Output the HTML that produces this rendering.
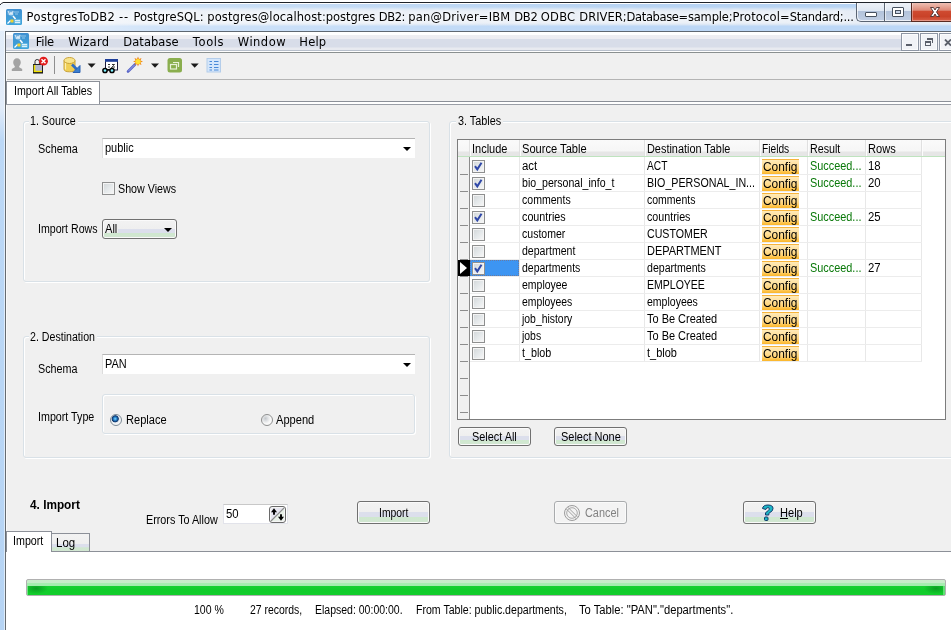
<!DOCTYPE html>
<html>
<head>
<meta charset="utf-8">
<title>PostgresToDB2</title>
<style>
html,body{margin:0;padding:0;}
body{width:951px;height:630px;overflow:hidden;position:relative;background:#f0f0f0;font-family:"Liberation Sans",sans-serif;font-size:12px;color:#000;}
.a{position:absolute;white-space:nowrap;box-sizing:border-box;}
.t{position:absolute;white-space:nowrap;font-size:12px;line-height:14px;transform-origin:0 0;filter:saturate(1);}
.grp{position:absolute;border:1px solid #d9e1e7;border-radius:3px;box-sizing:border-box;box-shadow:inset 1px 1px 0 #fff, 1px 1px 0 #fff;}
.btn{position:absolute;box-sizing:border-box;border:1px solid #707070;border-radius:3px;background:linear-gradient(180deg,#f2f2f2 0%,#efefef 48%,#dcdfec 49%,#dcdfec 71%,#cfe8cf 72%,#d2e6d2 100%);box-shadow:inset 0 0 0 1px #fafafa;}
.cb{position:absolute;width:13px;height:13px;border:1px solid #8e8f8f;background:linear-gradient(135deg,#d2d6d8 0%,#e4e8ea 50%,#f8f8f8 100%);box-shadow:inset 0 0 0 1px #f4f4f4;box-sizing:border-box;}
.cfg{position:absolute;left:762px;width:37px;height:15px;background:linear-gradient(180deg,#ffeab8 0,#ffe09c 5px,#ffd274 10px,#fcbc36 13px,#fbb52a 100%);box-sizing:border-box;border-top:1px dotted #f2b048;}
.ok{color:#087808;}
.hl{position:absolute;background:#ececec;height:1px;}
.vl{position:absolute;background:#e8e8e8;width:1px;}
.tick{position:absolute;left:460px;width:8px;height:1px;background:#8c8c8c;}
.arr{position:absolute;width:0;height:0;border-left:4px solid transparent;border-right:4px solid transparent;border-top:4px solid #000;}
</style>
</head>
<body>
<div class="a" style="left:0;top:0;width:951px;height:630px;background:linear-gradient(180deg,#e4eefa 0,#e2ecf9 108px,#bcd8f6 140px,#b6d4f4 100%);"></div>
<div class="a" style="left:4px;top:31px;width:1px;height:599px;background:rgba(255,255,255,.55);"></div>
<div class="a" style="left:0;top:4px;width:951px;height:27px;background:linear-gradient(180deg,#b7d3f3 0,#b9d5f4 3px,#d9e5f3 5px,#e6ecf5 7px,#e8eef6 19px,#d5e3f4 21px,#bcd7f6 22px,#bcd7f6 100%);"></div>
<div class="a" style="left:0;top:4px;width:951px;height:27px;background:linear-gradient(90deg,rgba(255,255,255,.8) 0,rgba(255,255,255,.6) 60px,rgba(255,255,255,.3) 160px,rgba(255,255,255,.12) 400px,rgba(255,255,255,0) 620px);"></div>
<div class="a" style="left:0;top:0;width:951px;height:2px;background:#fff;"></div>
<div class="a" style="left:3px;top:2px;width:948px;height:1px;background:#20242a;"></div>
<div class="a" style="left:0;top:3px;width:951px;height:1px;background:#fdfeff;"></div>
<svg class="a" style="left:0;top:0" width="8" height="10" viewBox="0 0 8 10"><path d="M0 0H8V2H3.500L0 5Z" fill="#fff"/><path d="M0 5 L1.500 3.300 L3.500 2.500 H8" fill="none" stroke="#20242a" stroke-width="1"/></svg>
<svg class="a" style="left:6px;top:9px" width="16" height="16" viewBox="0 0 16 16"><defs><linearGradient id="gi1" x1="0" y1="0" x2="0" y2="1"><stop offset="0" stop-color="#3f8fd0"/><stop offset="1" stop-color="#3ea5dc"/></linearGradient></defs><rect x="0" y="0" width="16" height="16" rx="1.500" fill="url(#gi1)"/><path d="M1.500 1.500h6v4.500l-2 1.500-4-2z" fill="#fff" fill-opacity=".28"/><path d="M2 2l2 4 1-3 1 3 1-4" stroke="#e4f2fc" stroke-width="0.900" fill="none"/><path d="M8 3h5M9 5h3" stroke="#a8d4f0" stroke-width="0.800"/><path d="M7 7l2.500 3" stroke="#fff" stroke-width="1.500"/><path d="M1.500 14.500l3-3" stroke="#fff" stroke-width="1.300"/><rect x="4.500" y="10.500" width="3" height="3" fill="#f2d230"/><rect x="8.500" y="10.500" width="6" height="4" fill="#8fd0ee"/><path d="M9 11.500h5M9 13.500h5" stroke="#fff" stroke-width="0.700"/></svg>
<div class="t " style="left:26.6px;top:10.6px;font-size:11.5px;line-height:13px;letter-spacing:0.26px;font-family:'DejaVu Sans',sans-serif;white-space:pre;text-shadow:0 0 4px #fff,0 0 6px #fff;">PostgresToDB2 </div>
<div class="t " style="left:119.0px;top:10.6px;font-size:11.5px;line-height:13px;letter-spacing:0.81px;font-family:'DejaVu Sans',sans-serif;white-space:pre;text-shadow:0 0 4px #fff,0 0 6px #fff;">-- </div>
<div class="t " style="left:133.4px;top:10.6px;font-size:11.5px;line-height:13px;letter-spacing:0.06px;font-family:'DejaVu Sans',sans-serif;white-space:pre;text-shadow:0 0 4px #fff,0 0 6px #fff;">PostgreSQL: </div>
<div class="t " style="left:207.3px;top:10.6px;font-size:11.5px;line-height:13px;letter-spacing:0.1px;font-family:'DejaVu Sans',sans-serif;white-space:pre;text-shadow:0 0 4px #fff,0 0 6px #fff;">postgres@localhost:</div>
<div class="t " style="left:325.8px;top:10.6px;font-size:11.5px;line-height:13px;letter-spacing:-0.04px;font-family:'DejaVu Sans',sans-serif;white-space:pre;text-shadow:0 0 4px #fff,0 0 6px #fff;">postgres </div>
<div class="t " style="left:378.8px;top:10.6px;font-size:11.5px;line-height:13px;letter-spacing:-0.42px;font-family:'DejaVu Sans',sans-serif;white-space:pre;text-shadow:0 0 4px #fff,0 0 6px #fff;">DB2: </div>
<div class="t " style="left:408.3px;top:10.6px;font-size:11.5px;line-height:13px;letter-spacing:0.2px;font-family:'DejaVu Sans',sans-serif;white-space:pre;text-shadow:0 0 4px #fff,0 0 6px #fff;">pan@Driver=IBM </div>
<div class="t " style="left:514.3px;top:10.6px;font-size:11.5px;line-height:13px;letter-spacing:-0.3px;font-family:'DejaVu Sans',sans-serif;white-space:pre;text-shadow:0 0 4px #fff,0 0 6px #fff;">DB2 </div>
<div class="t " style="left:540.8px;top:10.6px;font-size:11.5px;line-height:13px;letter-spacing:0.24px;font-family:'DejaVu Sans',sans-serif;white-space:pre;text-shadow:0 0 4px #fff,0 0 6px #fff;">ODBC </div>
<div class="t " style="left:579.3px;top:10.6px;font-size:11.5px;line-height:13px;letter-spacing:0.01px;font-family:'DejaVu Sans',sans-serif;white-space:pre;text-shadow:0 0 4px #fff,0 0 6px #fff;">DRIVER;</div>
<div class="t " style="left:626.6px;top:10.6px;font-size:11.5px;line-height:13px;letter-spacing:-0.36px;font-family:'DejaVu Sans',sans-serif;white-space:pre;text-shadow:0 0 4px #fff,0 0 6px #fff;">Database=</div>
<div class="t " style="left:687.9px;top:10.6px;font-size:11.5px;line-height:13px;letter-spacing:-0.16px;font-family:'DejaVu Sans',sans-serif;white-space:pre;text-shadow:0 0 4px #fff,0 0 6px #fff;">sample;</div>
<div class="t " style="left:732.5px;top:10.6px;font-size:11.5px;line-height:13px;letter-spacing:0.15px;font-family:'DejaVu Sans',sans-serif;white-space:pre;text-shadow:0 0 4px #fff,0 0 6px #fff;">Protocol=</div>
<div class="t " style="left:789.8px;top:10.6px;font-size:11.5px;line-height:13px;letter-spacing:-0.28px;font-family:'DejaVu Sans',sans-serif;white-space:pre;text-shadow:0 0 4px #fff,0 0 6px #fff;">Standard;...</div>
<div class="a" style="left:856px;top:3px;width:56px;height:19px;border:1px solid #5a6472;border-top:none;border-right:none;border-radius:0 0 0 5px;background:linear-gradient(180deg,#eef2f8 0%,#dfe7f2 44%,#b3c3db 46%,#c1cfe4 100%);box-shadow:inset 1px -1px 0 rgba(255,255,255,.7);"></div>
<div class="a" style="left:884px;top:3px;width:1px;height:18px;background:#5a6472;"></div>
<div class="a" style="left:885px;top:3px;width:1px;height:18px;background:rgba(255,255,255,.6);"></div>
<div class="a" style="left:911px;top:3px;width:40px;height:19px;border-left:1px solid #5a2a22;border-bottom:1px solid #5a2a22;background:linear-gradient(180deg,#eec0b4 0%,#dd8a78 40%,#cf4a30 46%,#c94228 75%,#d86048 100%);box-shadow:inset 1px -1px 0 rgba(255,255,255,.35);"></div>
<div class="a" style="left:865px;top:12px;width:12px;height:5px;border:1px solid #47515f;background:#fff;border-radius:1px;"></div>
<div class="a" style="left:892px;top:7px;width:12px;height:10px;border:1px solid #47515f;background:#fff;border-radius:1px;"></div>
<div class="a" style="left:895px;top:10px;width:6px;height:4px;border:1px solid #47515f;background:#c7d3e6;"></div>
<svg class="a" style="left:928px;top:6px" width="14" height="12" viewBox="0 0 14 12"><path d="M2.500 1.500h3l1.500 2.500 1.500-2.500h3l-3 4.500 3 4.500h-3l-1.500-2.500-1.500 2.500h-3l3-4.500z" fill="#fff" stroke="#4a3030" stroke-width="0.900"/></svg>
<div class="a" style="left:5px;top:31px;width:946px;height:599px;border-left:1px solid #666b70;border-top:1px solid #5f6872;background:#f0f0f0;"></div>
<div class="a" style="left:6px;top:32px;width:1px;height:598px;background:#fafafa;"></div>
<div class="a" style="left:6px;top:32px;width:895px;height:20px;background:linear-gradient(180deg,#fff 0,#fff 3px,#eeeef2 3px,#ececf2 7px,#d8dde9 7px,#d8dde9 15px,#e8eaf0 16px,#e8eaf0 18px,#b8c0cc 18px,#b8c0cc 19px,#fff 19px);"></div>
<div class="a" style="left:901px;top:32px;width:50px;height:20px;background:linear-gradient(180deg,#fff 0,#fff 2px,#f1f2f6 2px,#eff0f5 18px,#b8c0cc 18px,#b8c0cc 19px,#fff 19px);"></div>
<div class="a" style="left:6px;top:52px;width:945px;height:1px;background:#8a9090;"></div>
<svg class="a" style="left:13px;top:33px" width="16" height="16" viewBox="0 0 16 16"><defs><linearGradient id="gi2" x1="0" y1="0" x2="0" y2="1"><stop offset="0" stop-color="#3f8fd0"/><stop offset="1" stop-color="#3ea5dc"/></linearGradient></defs><rect x="0" y="0" width="16" height="16" rx="1.500" fill="url(#gi2)"/><path d="M1.500 1.500h6v4.500l-2 1.500-4-2z" fill="#fff" fill-opacity=".28"/><path d="M2 2l2 4 1-3 1 3 1-4" stroke="#e4f2fc" stroke-width="0.900" fill="none"/><path d="M8 3h5M9 5h3" stroke="#a8d4f0" stroke-width="0.800"/><path d="M7 7l2.500 3" stroke="#fff" stroke-width="1.500"/><path d="M1.500 14.500l3-3" stroke="#fff" stroke-width="1.300"/><rect x="4.500" y="10.500" width="3" height="3" fill="#f2d230"/><rect x="8.500" y="10.500" width="6" height="4" fill="#8fd0ee"/><path d="M9 11.500h5M9 13.500h5" stroke="#fff" stroke-width="0.700"/></svg>
<div class="t " style="left:35.8px;top:36.2px;font-size:11.5px;line-height:13px;letter-spacing:-0.32px;font-family:'DejaVu Sans',sans-serif;">File</div>
<div class="t " style="left:68.3px;top:36.2px;font-size:11.5px;line-height:13px;letter-spacing:0.31px;font-family:'DejaVu Sans',sans-serif;">Wizard</div>
<div class="t " style="left:123.3px;top:36.2px;font-size:11.5px;line-height:13px;letter-spacing:0.06px;font-family:'DejaVu Sans',sans-serif;">Database</div>
<div class="t " style="left:192.8px;top:36.2px;font-size:11.5px;line-height:13px;letter-spacing:0.62px;font-family:'DejaVu Sans',sans-serif;">Tools</div>
<div class="t " style="left:237.8px;top:36.2px;font-size:11.5px;line-height:13px;letter-spacing:0.49px;font-family:'DejaVu Sans',sans-serif;">Window</div>
<div class="t " style="left:299.3px;top:36.2px;font-size:11.5px;line-height:13px;letter-spacing:0.2px;font-family:'DejaVu Sans',sans-serif;">Help</div>
<div class="a" style="left:901px;top:33px;width:18px;height:18px;border:1px solid #8e96a4;background:#f1f3f7;box-shadow:inset 0 0 0 1px #fbfcfd;"></div>
<div class="a" style="left:920px;top:33px;width:18px;height:18px;border:1px solid #8e96a4;background:#f1f3f7;box-shadow:inset 0 0 0 1px #fbfcfd;"></div>
<div class="a" style="left:939px;top:33px;width:18px;height:18px;border:1px solid #8e96a4;background:#f1f3f7;box-shadow:inset 0 0 0 1px #fbfcfd;"></div>
<div class="a" style="left:906px;top:44px;width:6px;height:2px;background:#5a5f6a;"></div>
<div class="a" style="left:925px;top:41px;width:6px;height:5px;border:1px solid #5a5f6a;border-top-width:2px;"></div>
<div class="a" style="left:927px;top:38px;width:6px;height:5px;border:1px solid #5a5f6a;border-top-width:2px;border-left:none;border-bottom:none"></div>
<svg class="a" style="left:944px;top:39px" width="8" height="8" viewBox="0 0 8 8"><path d="M1 0.500l6 6M7 0.500l-6 6" stroke="#5a5f6a" stroke-width="1.800"/></svg>
<div class="a" style="left:7px;top:79px;width:944px;height:1px;background:#b4b4b4;"></div>
<div class="a" style="left:54px;top:56px;width:1px;height:18px;background:#8e8e8e;"></div>
<svg class="a" style="left:7px;top:53px" width="230" height="26" viewBox="0 0 230 26">
<g>
<path d="M10 5.300c2.300 0 3.800 1.800 3.800 4.200 0 1.600-.8 2.800-1.600 3.500l0 1.200 3 1.800v2h-10.400v-2l3-1.800 0-1.200c-.8-.7-1.600-1.900-1.600-3.500 0-2.400 1.500-4.200 3.800-4.200z" fill="#a3a3a3"/>
<path d="M28 12v-3.500q0-2 2.200-2t2.200 2V12" fill="none" stroke="#333" stroke-width="1"/>
<rect x="26.500" y="11.500" width="9" height="8" fill="#b4b8cc" stroke="#222" stroke-width="1"/><path d="M27.500 12v7M27 18.500h8" stroke="#f2e200" stroke-width="1.600"/><path d="M26 20h10" stroke="#111" stroke-width="1"/>
<circle cx="36.500" cy="8.200" r="4.400" fill="#e21c1c"/><path d="M34.500 6.200l4 4m0-4l-4 4" stroke="#fff" stroke-width="1.400"/>
<path d="M57 7.500v8.500q0 2.800 5.500 2.800t5.500-2.800v-8.500z" fill="#f0cf54" stroke="#c9a238" stroke-width="1"/><ellipse cx="62.500" cy="7.500" rx="5.500" ry="3" fill="#f8e48c" stroke="#c9a238" stroke-width="1"/><path d="M58.500 10v6.500" stroke="#fbeeb0" stroke-width="1.200"/>
<path d="M65 11.500l5 5" stroke="#2f6ec4" stroke-width="2.600"/><path d="M73 12.500v7h-7z" fill="#3b7fd0" stroke="#2a62b4" stroke-width="1" stroke-linejoin="round"/>
<path d="M80.600 10.500h8l-4 4.200z" fill="#1a1a1a"/>
<rect x="98.500" y="6.500" width="12" height="10.500" fill="#fff" stroke="#1c1c3a"/><rect x="98" y="6" width="13" height="2.800" fill="#1f3f9a"/><path d="M101 11.500h2m2 0h2m-6 2.500h2m2 0h3" stroke="#333"/><path d="M104 15l4-4" stroke="#333" stroke-width="0.800"/>
<circle cx="98" cy="17.500" r="2.100" fill="#7ff0ff" stroke="#000" stroke-width="1.500"/><circle cx="105" cy="17.500" r="2.100" fill="#7ff0ff" stroke="#000" stroke-width="1.500"/><path d="M100.200 16.800h2.600" stroke="#000" stroke-width="1.600"/>
<path d="M121 18.500l7-7" stroke="#5a66c8" stroke-width="2.600" stroke-linecap="round"/><path d="M121.500 18l6-6" stroke="#aab4f0" stroke-width="0.800"/>
<path d="M131 3.500l1 2.500 2.500-1-1 2.500 2.500 1-2.500 1 1 2.500-2.500-1-1 2.500-1-2.500-2.500 1 1-2.500-2.500-1 2.500-1-1-2.500 2.500 1z" fill="#f08a1c"/><circle cx="131" cy="8.500" r="2.600" fill="#ffe030"/>
<path d="M144 10.500h8l-4 4.200z" fill="#1a1a1a"/>
<rect x="160.500" y="5" width="14.500" height="14.500" rx="2.500" fill="#8aae4e"/><rect x="163.500" y="11.500" width="6" height="4.500" fill="none" stroke="#e8f0d8" stroke-width="1.200"/><path d="M166 9.500h5.500v4.500" fill="none" stroke="#e8f0d8" stroke-width="1.200"/>
<path d="M183.700 10.500h8l-4 4.200z" fill="#1a1a1a"/>
<rect x="200" y="5.500" width="13.500" height="13.500" fill="#d4e6fb" stroke="#b4cdea" stroke-width="1"/><path d="M202.500 8.500h2.500m2 0h4.500M202.500 11.500h2.500m2 0h4.500M202.500 14.500h2.500m2 0h4.500M202.500 17h2.500m2 0h4.500" stroke="#4a8ad8" stroke-width="1.200"/>
</g></svg>
<div class="a" style="left:100px;top:101px;width:851px;height:1px;background:#8c9098;"></div>
<div class="a" style="left:7px;top:102px;width:944px;height:2px;background:#fff;"></div>
<div class="a" style="left:6px;top:104px;width:945px;height:1px;background:#9a9ea6;"></div>
<div class="a" style="left:6px;top:81px;width:94px;height:23px;border:1px solid #8c9098;border-bottom:none;background:#fff;"></div>
<div class="t " style="left:14.1px;top:83.7px;font-size:12px;line-height:14px;transform:scaleX(0.889);">Import All Tables</div>
<div class="grp" style="left:23px;top:121px;width:407px;height:161px;"></div>
<div class="a" style="left:29px;top:119px;width:49px;height:5px;background:#f0f0f0;"></div>
<div class="t " style="left:30.3px;top:113.8px;font-size:12px;line-height:14px;transform:scaleX(0.890);">1. Source</div>
<div class="t " style="left:37.6px;top:141.5px;font-size:12px;line-height:14px;transform:scaleX(0.903);">Schema</div>
<div class="a" style="left:102px;top:138px;width:313px;height:20px;background:#fff;border-top:1px solid #b4b4b4;border-left:1px solid #dcdcdc;"></div>
<div class="t " style="left:104.7px;top:140.6px;font-size:12px;line-height:14px;transform:scaleX(0.913);">public</div>
<div class="arr" style="left:403px;top:147px;"></div>
<div class="cb" style="left:102px;top:182px;"></div>
<div class="t " style="left:118.1px;top:181.5px;font-size:12px;line-height:14px;transform:scaleX(0.892);">Show Views</div>
<div class="t " style="left:37.6px;top:221.7px;font-size:12px;line-height:14px;transform:scaleX(0.884);">Import Rows</div>
<div class="btn" style="left:102px;top:219px;width:75px;height:20px;"></div>
<div class="a" style="left:104px;top:228px;width:14px;height:5px;background:#efefef;"></div>
<div class="t " style="left:104.8px;top:221.7px;font-size:12px;line-height:14px;transform:scaleX(0.925);">All</div>
<div class="arr" style="left:164px;top:228px;"></div>
<div class="grp" style="left:23px;top:336px;width:407px;height:122px;"></div>
<div class="a" style="left:29px;top:334px;width:68px;height:5px;background:#f0f0f0;"></div>
<div class="t " style="left:30.3px;top:329.5px;font-size:12px;line-height:14px;transform:scaleX(0.885);">2. Destination</div>
<div class="t " style="left:37.7px;top:361.8px;font-size:12px;line-height:14px;transform:scaleX(0.896);">Schema</div>
<div class="a" style="left:102px;top:354px;width:313px;height:20px;background:#fff;border-top:1px solid #b4b4b4;border-left:1px solid #dcdcdc;"></div>
<div class="t " style="left:104.8px;top:356.6px;font-size:12px;line-height:14px;transform:scaleX(0.909);">PAN</div>
<div class="arr" style="left:403px;top:363px;"></div>
<div class="t " style="left:37.7px;top:410.0px;font-size:12px;line-height:14px;transform:scaleX(0.892);">Import Type</div>
<div class="grp" style="left:102px;top:394px;width:313px;height:40px;"></div>
<div class="a" style="left:110px;top:414px;width:12px;height:12px;border:1px solid #7c8a96;border-radius:6px;background:radial-gradient(circle at 42% 38%,#8ad8fa 0,#2e90d8 1.400px,#164a88 2.600px,#123a6e 3.200px,#dfe6ee 3.900px,#f4f5f6 5px);"></div>
<div class="t " style="left:125.6px;top:412.6px;font-size:12px;line-height:14px;transform:scaleX(0.923);">Replace</div>
<div class="a" style="left:261px;top:414px;width:12px;height:12px;border:1px solid #8e8f8f;border-radius:6px;background:radial-gradient(circle at 35% 35%,#c4c8cc 0,#e4e6e8 3px,#f8f8f8 5px);"></div>
<div class="t " style="left:276.2px;top:412.6px;font-size:12px;line-height:14px;transform:scaleX(0.924);">Append</div>
<div class="grp" style="left:449px;top:121px;width:520px;height:337px;"></div>
<div class="a" style="left:456px;top:119px;width:47px;height:5px;background:#f0f0f0;"></div>
<div class="t " style="left:457.5px;top:113.8px;font-size:12px;line-height:14px;transform:scaleX(0.904);">3. Tables</div>
<div class="a" style="left:457px;top:139px;width:489px;height:281px;border:1px solid #7c7c7c;background:#fff;"></div>
<div class="a" style="left:458px;top:140px;width:487px;height:16px;background:linear-gradient(180deg,#fafafa 0,#f6f6f6 11px,#e6e6e6 12px,#e6e6e6 100%);"></div>
<div class="a" style="left:458px;top:156px;width:487px;height:1px;background:#bfe3bf;"></div>
<div class="a" style="left:469px;top:140px;width:2px;height:16px;background:linear-gradient(90deg,#e0e0e0 50%,#fcfcfc 50%);"></div>
<div class="a" style="left:519px;top:140px;width:2px;height:16px;background:linear-gradient(90deg,#e0e0e0 50%,#fcfcfc 50%);"></div>
<div class="a" style="left:644px;top:140px;width:2px;height:16px;background:linear-gradient(90deg,#e0e0e0 50%,#fcfcfc 50%);"></div>
<div class="a" style="left:759px;top:140px;width:2px;height:16px;background:linear-gradient(90deg,#e0e0e0 50%,#fcfcfc 50%);"></div>
<div class="a" style="left:807px;top:140px;width:2px;height:16px;background:linear-gradient(90deg,#e0e0e0 50%,#fcfcfc 50%);"></div>
<div class="a" style="left:865px;top:140px;width:2px;height:16px;background:linear-gradient(90deg,#e0e0e0 50%,#fcfcfc 50%);"></div>
<div class="a" style="left:921px;top:140px;width:2px;height:16px;background:linear-gradient(90deg,#e0e0e0 50%,#fcfcfc 50%);"></div>
<div class="a" style="left:458px;top:157px;width:12px;height:262px;background:#f0f0f0;border-right:1px solid #8c8c8c;border-left:1px solid #f8f8f8;"></div>
<div class="t " style="left:471.8px;top:141.5px;font-size:12px;line-height:14px;transform:scaleX(0.916);">Include</div>
<div class="t " style="left:521.7px;top:141.5px;font-size:12px;line-height:14px;transform:scaleX(0.926);">Source Table</div>
<div class="t " style="left:646.6px;top:141.5px;font-size:12px;line-height:14px;transform:scaleX(0.908);">Destination Table</div>
<div class="t " style="left:761.8px;top:141.5px;font-size:12px;line-height:14px;transform:scaleX(0.848);">Fields</div>
<div class="t " style="left:809.8px;top:141.5px;font-size:12px;line-height:14px;transform:scaleX(0.892);">Result</div>
<div class="t " style="left:867.6px;top:141.5px;font-size:12px;line-height:14px;transform:scaleX(0.924);">Rows</div>
<div class="vl" style="left:519px;top:157px;height:205px;"></div>
<div class="vl" style="left:644px;top:157px;height:205px;"></div>
<div class="vl" style="left:759px;top:157px;height:205px;"></div>
<div class="vl" style="left:807px;top:157px;height:205px;"></div>
<div class="vl" style="left:865px;top:157px;height:205px;"></div>
<div class="vl" style="left:921px;top:157px;height:205px;"></div>
<div class="hl" style="left:470px;top:174px;width:452px;"></div>
<div class="tick" style="top:174px;"></div>
<div class="cb" style="left:472px;top:160px;"></div>
<svg class="a" style="left:472px;top:160px" width="13" height="13" viewBox="0 0 13 13"><path d="M3 6.200l2.300 3.200 4.200-6.600" fill="none" stroke="#3048a8" stroke-width="2"/></svg>
<div class="t " style="left:521.7px;top:159.1px;font-size:12px;line-height:14px;transform:scaleX(0.952);">act</div>
<div class="t " style="left:646.6px;top:159.1px;font-size:12px;line-height:14px;transform:scaleX(0.852);">ACT</div>
<div class="cfg" style="top:159px;"></div>
<div class="t " style="left:763.0px;top:158.6px;font-size:13.6px;line-height:16px;transform:scaleX(0.877);">Config</div>
<div class="t ok" style="left:809.8px;top:159.1px;font-size:12px;line-height:14px;transform:scaleX(0.907);">Succeed...</div>
<div class="t " style="left:867.6px;top:159.1px;font-size:12px;line-height:14px;transform:scaleX(0.946);">18</div>
<div class="hl" style="left:470px;top:191px;width:452px;"></div>
<div class="tick" style="top:191px;"></div>
<div class="cb" style="left:472px;top:177px;"></div>
<svg class="a" style="left:472px;top:177px" width="13" height="13" viewBox="0 0 13 13"><path d="M3 6.200l2.300 3.200 4.200-6.600" fill="none" stroke="#3048a8" stroke-width="2"/></svg>
<div class="t " style="left:521.7px;top:176.1px;font-size:12px;line-height:14px;transform:scaleX(0.882);">bio_personal_info_t</div>
<div class="t " style="left:646.6px;top:176.1px;font-size:12px;line-height:14px;transform:scaleX(0.890);">BIO_PERSONAL_IN...</div>
<div class="cfg" style="top:176px;"></div>
<div class="t " style="left:763.0px;top:175.6px;font-size:13.6px;line-height:16px;transform:scaleX(0.877);">Config</div>
<div class="t ok" style="left:809.8px;top:176.1px;font-size:12px;line-height:14px;transform:scaleX(0.907);">Succeed...</div>
<div class="t " style="left:867.6px;top:176.1px;font-size:12px;line-height:14px;transform:scaleX(0.946);">20</div>
<div class="hl" style="left:470px;top:208px;width:452px;"></div>
<div class="tick" style="top:208px;"></div>
<div class="cb" style="left:472px;top:194px;"></div>
<div class="t " style="left:521.7px;top:193.1px;font-size:12px;line-height:14px;transform:scaleX(0.879);">comments</div>
<div class="t " style="left:646.6px;top:193.1px;font-size:12px;line-height:14px;transform:scaleX(0.875);">comments</div>
<div class="cfg" style="top:193px;"></div>
<div class="t " style="left:763.0px;top:192.6px;font-size:13.6px;line-height:16px;transform:scaleX(0.877);">Config</div>
<div class="hl" style="left:470px;top:225px;width:452px;"></div>
<div class="tick" style="top:225px;"></div>
<div class="cb" style="left:472px;top:211px;"></div>
<svg class="a" style="left:472px;top:211px" width="13" height="13" viewBox="0 0 13 13"><path d="M3 6.200l2.300 3.200 4.200-6.600" fill="none" stroke="#3048a8" stroke-width="2"/></svg>
<div class="t " style="left:521.7px;top:210.1px;font-size:12px;line-height:14px;transform:scaleX(0.896);">countries</div>
<div class="t " style="left:646.6px;top:210.1px;font-size:12px;line-height:14px;transform:scaleX(0.892);">countries</div>
<div class="cfg" style="top:210px;"></div>
<div class="t " style="left:763.0px;top:209.6px;font-size:13.6px;line-height:16px;transform:scaleX(0.877);">Config</div>
<div class="t ok" style="left:809.8px;top:210.1px;font-size:12px;line-height:14px;transform:scaleX(0.907);">Succeed...</div>
<div class="t " style="left:867.6px;top:210.1px;font-size:12px;line-height:14px;transform:scaleX(0.946);">25</div>
<div class="hl" style="left:470px;top:242px;width:452px;"></div>
<div class="tick" style="top:242px;"></div>
<div class="cb" style="left:472px;top:228px;"></div>
<div class="t " style="left:521.7px;top:227.1px;font-size:12px;line-height:14px;transform:scaleX(0.878);">customer</div>
<div class="t " style="left:646.6px;top:227.1px;font-size:12px;line-height:14px;transform:scaleX(0.887);">CUSTOMER</div>
<div class="cfg" style="top:227px;"></div>
<div class="t " style="left:763.0px;top:226.6px;font-size:13.6px;line-height:16px;transform:scaleX(0.877);">Config</div>
<div class="hl" style="left:470px;top:259px;width:452px;"></div>
<div class="tick" style="top:259px;"></div>
<div class="cb" style="left:472px;top:245px;"></div>
<div class="t " style="left:521.7px;top:244.1px;font-size:12px;line-height:14px;transform:scaleX(0.880);">department</div>
<div class="t " style="left:646.6px;top:244.1px;font-size:12px;line-height:14px;transform:scaleX(0.913);">DEPARTMENT</div>
<div class="cfg" style="top:244px;"></div>
<div class="t " style="left:763.0px;top:243.6px;font-size:13.6px;line-height:16px;transform:scaleX(0.877);">Config</div>
<div class="hl" style="left:470px;top:276px;width:452px;"></div>
<div class="tick" style="top:276px;"></div>
<div class="a" style="left:458px;top:260px;width:12px;height:16px;background:#000;"></div>
<div class="a" style="left:460px;top:262px;width:0;height:0;border-top:6px solid transparent;border-bottom:6px solid transparent;border-left:7px solid #fff;"></div>
<div class="a" style="left:470px;top:260px;width:49px;height:16px;background:#3d95f2;border:1px dotted #6a7aa0;"></div>
<div class="cb" style="left:472px;top:262px;"></div>
<svg class="a" style="left:472px;top:262px" width="13" height="13" viewBox="0 0 13 13"><path d="M3 6.200l2.300 3.200 4.200-6.600" fill="none" stroke="#3048a8" stroke-width="2"/></svg>
<div class="t " style="left:521.7px;top:261.1px;font-size:12px;line-height:14px;transform:scaleX(0.875);">departments</div>
<div class="t " style="left:646.6px;top:261.1px;font-size:12px;line-height:14px;transform:scaleX(0.882);">departments</div>
<div class="cfg" style="top:261px;"></div>
<div class="t " style="left:763.0px;top:260.6px;font-size:13.6px;line-height:16px;transform:scaleX(0.877);">Config</div>
<div class="t ok" style="left:809.8px;top:261.1px;font-size:12px;line-height:14px;transform:scaleX(0.907);">Succeed...</div>
<div class="t " style="left:867.6px;top:261.1px;font-size:12px;line-height:14px;transform:scaleX(0.946);">27</div>
<div class="hl" style="left:470px;top:293px;width:452px;"></div>
<div class="tick" style="top:293px;"></div>
<div class="cb" style="left:472px;top:279px;"></div>
<div class="t " style="left:521.7px;top:278.1px;font-size:12px;line-height:14px;transform:scaleX(0.873);">employee</div>
<div class="t " style="left:646.6px;top:278.1px;font-size:12px;line-height:14px;transform:scaleX(0.876);">EMPLOYEE</div>
<div class="cfg" style="top:278px;"></div>
<div class="t " style="left:763.0px;top:277.6px;font-size:13.6px;line-height:16px;transform:scaleX(0.877);">Config</div>
<div class="hl" style="left:470px;top:310px;width:452px;"></div>
<div class="tick" style="top:310px;"></div>
<div class="cb" style="left:472px;top:296px;"></div>
<div class="t " style="left:521.7px;top:295.1px;font-size:12px;line-height:14px;transform:scaleX(0.867);">employees</div>
<div class="t " style="left:646.6px;top:295.1px;font-size:12px;line-height:14px;transform:scaleX(0.876);">employees</div>
<div class="cfg" style="top:295px;"></div>
<div class="t " style="left:763.0px;top:294.6px;font-size:13.6px;line-height:16px;transform:scaleX(0.877);">Config</div>
<div class="hl" style="left:470px;top:327px;width:452px;"></div>
<div class="tick" style="top:327px;"></div>
<div class="cb" style="left:472px;top:313px;"></div>
<div class="t " style="left:521.7px;top:312.1px;font-size:12px;line-height:14px;transform:scaleX(0.867);">job_history</div>
<div class="t " style="left:646.6px;top:312.1px;font-size:12px;line-height:14px;transform:scaleX(0.914);">To Be Created</div>
<div class="cfg" style="top:312px;"></div>
<div class="t " style="left:763.0px;top:311.6px;font-size:13.6px;line-height:16px;transform:scaleX(0.877);">Config</div>
<div class="hl" style="left:470px;top:344px;width:452px;"></div>
<div class="tick" style="top:344px;"></div>
<div class="cb" style="left:472px;top:330px;"></div>
<div class="t " style="left:521.7px;top:329.1px;font-size:12px;line-height:14px;transform:scaleX(0.869);">jobs</div>
<div class="t " style="left:646.6px;top:329.1px;font-size:12px;line-height:14px;transform:scaleX(0.914);">To Be Created</div>
<div class="cfg" style="top:329px;"></div>
<div class="t " style="left:763.0px;top:328.6px;font-size:13.6px;line-height:16px;transform:scaleX(0.877);">Config</div>
<div class="hl" style="left:470px;top:361px;width:452px;"></div>
<div class="tick" style="top:361px;"></div>
<div class="cb" style="left:472px;top:347px;"></div>
<div class="t " style="left:521.7px;top:346.1px;font-size:12px;line-height:14px;transform:scaleX(0.897);">t_blob</div>
<div class="t " style="left:646.6px;top:346.1px;font-size:12px;line-height:14px;transform:scaleX(0.912);">t_blob</div>
<div class="cfg" style="top:346px;"></div>
<div class="t " style="left:763.0px;top:345.6px;font-size:13.6px;line-height:16px;transform:scaleX(0.877);">Config</div>
<div class="tick" style="top:378px;"></div>
<div class="tick" style="top:395px;"></div>
<div class="tick" style="top:412px;"></div>
<div class="btn" style="left:458px;top:427px;width:73px;height:19px;"></div>
<div class="t " style="left:471.6px;top:429.8px;font-size:12px;line-height:14px;transform:scaleX(0.906);">Select All</div>
<div class="btn" style="left:554px;top:427px;width:73px;height:19px;"></div>
<div class="t " style="left:560.6px;top:429.8px;font-size:12px;line-height:14px;transform:scaleX(0.915);">Select None</div>
<div class="t " style="left:30.3px;top:497.6px;font-size:12px;line-height:14px;transform:scaleX(0.984);font-weight:bold;">4. Import</div>
<div class="t " style="left:145.7px;top:513.4px;font-size:12px;line-height:14px;transform:scaleX(0.898);">Errors To Allow</div>
<div class="a" style="left:223px;top:504px;width:65px;height:20px;background:#fff;border:1px solid #e2e3ea;border-top-color:#c8c8c8;"></div>
<div class="t " style="left:225.6px;top:506.7px;font-size:12px;line-height:14px;transform:scaleX(0.946);">50</div>
<div class="a" style="left:269px;top:506px;width:17px;height:17px;border:1px solid #6a6a6a;border-radius:3px;background:linear-gradient(135deg,#ececf2 0,#e4e4ee 49%,#e6efe6 51%,#f0f4f0 100%);box-shadow:inset 0 0 0 1px #f6f6f6;"></div>
<svg class="a" style="left:269px;top:506px" width="17" height="17" viewBox="0 0 17 17"><path d="M2 15L15 2" stroke="#8c8c8c" stroke-width="1.100"/><path d="M5 2.300l3 3.900h-6z" fill="#000"/><path d="M5 6v2.800" stroke="#000" stroke-width="1.900"/><path d="M12 14.700l3-3.900h-6z" fill="#000"/><path d="M12 11v-2.800" stroke="#000" stroke-width="1.900"/></svg>
<div class="btn" style="left:357px;top:501px;width:73px;height:23px;"></div>
<div class="t " style="left:378.8px;top:505.7px;font-size:12px;line-height:14px;transform:scaleX(0.865);">Import</div>
<div class="a" style="left:554px;top:501px;width:73px;height:23px;border:1px solid #a9abad;border-radius:3px;background:#f3f3f3;box-shadow:inset 0 0 0 1px #fafafa;"></div>
<svg class="a" style="left:563px;top:504px" width="18" height="18" viewBox="0 0 18 18"><circle cx="9" cy="9" r="7.500" fill="none" stroke="#9c9c9c" stroke-width="1"/><circle cx="9" cy="9" r="5.300" fill="none" stroke="#a8a8a8" stroke-width="1"/><path d="M3.200 4.800l10 10M4.800 3.200l10 10" stroke="#a0a0a0" stroke-width="1"/></svg>
<div class="t " style="left:584.8px;top:505.7px;font-size:12px;line-height:14px;transform:scaleX(0.906);color:#828282;">Cancel</div>
<div class="btn" style="left:743px;top:501px;width:73px;height:23px;"></div>
<div class="t " style="left:779.5px;top:505.7px;font-size:12px;line-height:14px;transform:scaleX(0.921);"><u>H</u>elp</div>
<svg class="a" style="left:759px;top:503px" width="18" height="20" viewBox="0 0 18 20"><path d="M3.500 5.500q0.500-3.500 5.500-3.500 5 0 5 3.500 0 2.500-3 4l-1.200 1v1.500h-3.300v-2.200l3-2.500q0.800-0.700 0.800-1.600 0-1-1.400-1-1.700 0-2 1.800z" fill="#1cb6c6" stroke="#123a6a" stroke-width="1"/><rect x="5.500" y="14" width="3.500" height="3.500" rx="1" fill="#1cb6c6" stroke="#123a6a" stroke-width="1"/></svg>
<div class="a" style="left:6px;top:551px;width:945px;height:79px;background:#fff;border-top:1px solid #8c9098;"></div>
<div class="a" style="left:6px;top:531px;width:46px;height:21px;border:1px solid #8c9098;border-bottom:none;background:#fff;"></div>
<div class="a" style="left:52px;top:533px;width:38px;height:18px;border:1px solid #8c9098;border-left:none;border-bottom:none;background:linear-gradient(180deg,#f2f2f2 0%,#efefef 58%,#dcdfec 60%,#dcdfec 78%,#cfe8cf 80%,#d2e6d2 100%);"></div>
<div class="t " style="left:13.2px;top:533.5px;font-size:12px;line-height:14px;transform:scaleX(0.892);">Import</div>
<div class="t " style="left:55.7px;top:535.8px;font-size:12px;line-height:14px;transform:scaleX(0.956);">Log</div>
<div class="a" style="left:26px;top:579px;width:920px;height:17px;border:1px solid #b0b0b0;border-radius:2px;background:linear-gradient(180deg,#c9edca 0,#c6ecc8 3px,#a6eeb0 3px,#a2ecac 6px,#16d030 6px,#10cc2a 10px,#12ce2c 100%);"></div>
<div class="a" style="left:28px;top:586px;width:20px;height:8px;background:radial-gradient(ellipse at 40% 30%,#0a9e22 0,rgba(10,158,34,0) 72%);"></div>
<div class="a" style="left:924px;top:586px;width:20px;height:8px;background:radial-gradient(ellipse at 60% 30%,#0a9e22 0,rgba(10,158,34,0) 72%);"></div>
<div class="a" style="left:27px;top:586px;width:1px;height:9px;background:#6ee482;"></div>
<div class="a" style="left:943px;top:586px;width:2px;height:9px;background:#5fe074;"></div>
<div class="t " style="left:193.8px;top:602.9px;font-size:12px;line-height:14px;transform:scaleX(0.877);">100 %</div>
<div class="t " style="left:250.4px;top:602.9px;font-size:12px;line-height:14px;transform:scaleX(0.869);">27 records,</div>
<div class="t " style="left:315.2px;top:602.9px;font-size:12px;line-height:14px;transform:scaleX(0.875);">Elapsed: 00:00:00.</div>
<div class="t " style="left:415.8px;top:602.9px;font-size:12px;line-height:14px;transform:scaleX(0.881);">From Table: public.departments,</div>
<div class="t " style="left:579.0px;top:602.9px;font-size:12px;line-height:14px;transform:scaleX(0.933);">To Table: "PAN"."departments".</div>
</body>
</html>
